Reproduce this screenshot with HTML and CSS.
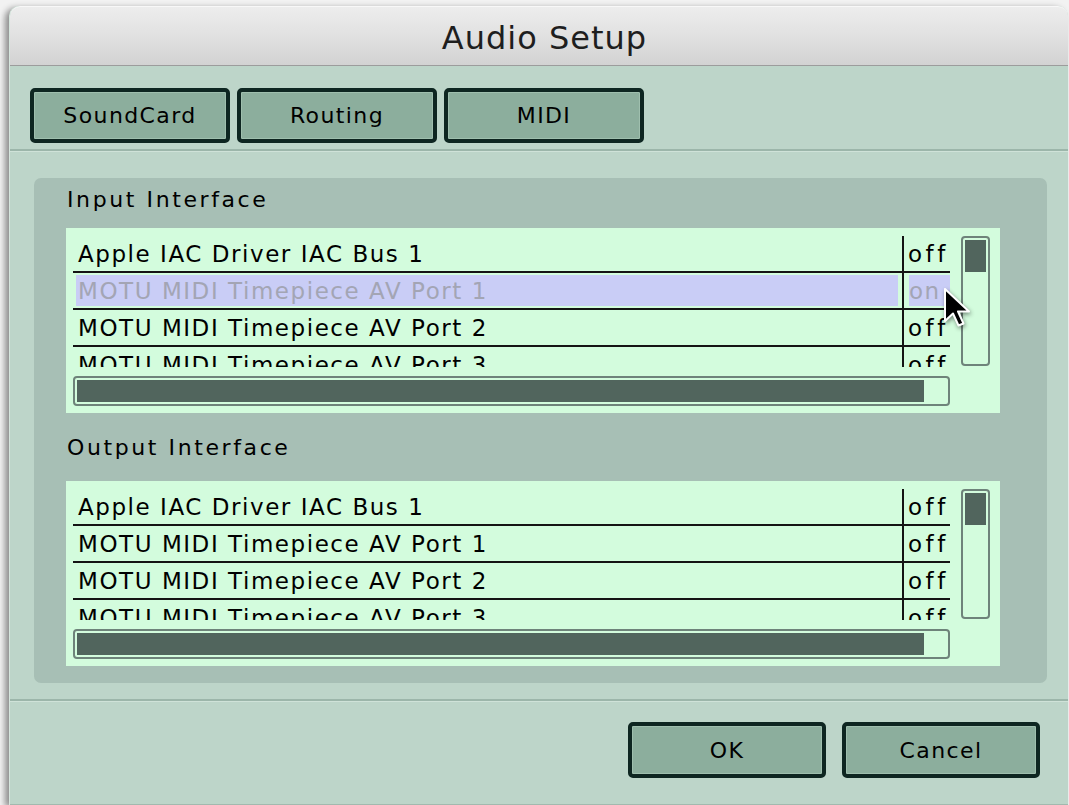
FILE: index.html
```html
<!DOCTYPE html>
<html lang="en">
<head>
<meta charset="utf-8">
<title>Audio Setup</title>
<link rel="stylesheet" href="styles.css">
</head>
<body>
<div class="desk">
  <div class="window">
    <div class="titlebar">Audio Setup</div>
    <div class="body">
      <div class="tabs">
        <button class="tab">SoundCard</button>
        <button class="tab">Routing</button>
        <button class="tab">MIDI</button>
      </div>
      <div class="content">
        <div class="panel">
          <section class="group">
            <div class="group-label">Input Interface</div>
            <div class="listbox">
              <div class="list-main">
                <div class="rows">
                  <div class="row"><div class="name"><span>Apple IAC Driver IAC Bus 1</span></div><div class="state"><span>off</span></div></div>
                  <div class="row selected"><div class="name"><span>MOTU MIDI Timepiece AV Port 1</span></div><div class="state"><span>on</span></div></div>
                  <div class="row"><div class="name"><span>MOTU MIDI Timepiece AV Port 2</span></div><div class="state"><span>off</span></div></div>
                  <div class="row"><div class="name"><span>MOTU MIDI Timepiece AV Port 3</span></div><div class="state"><span>off</span></div></div>
                </div>
                <div class="hscroll"><div class="hthumb"></div></div>
              </div>
              <div class="vscroll"><div class="vthumb"></div></div>
            </div>
          </section>
          <section class="group">
            <div class="group-label">Output Interface</div>
            <div class="listbox">
              <div class="list-main">
                <div class="rows">
                  <div class="row"><div class="name"><span>Apple IAC Driver IAC Bus 1</span></div><div class="state"><span>off</span></div></div>
                  <div class="row"><div class="name"><span>MOTU MIDI Timepiece AV Port 1</span></div><div class="state"><span>off</span></div></div>
                  <div class="row"><div class="name"><span>MOTU MIDI Timepiece AV Port 2</span></div><div class="state"><span>off</span></div></div>
                  <div class="row"><div class="name"><span>MOTU MIDI Timepiece AV Port 3</span></div><div class="state"><span>off</span></div></div>
                </div>
                <div class="hscroll"><div class="hthumb"></div></div>
              </div>
              <div class="vscroll"><div class="vthumb"></div></div>
            </div>
          </section>
        </div>
      </div>
      <div class="footer">
        <button class="btn">OK</button>
        <button class="btn">Cancel</button>
      </div>
    </div>
  </div>
  <!-- mouse pointer resting over the state column -->
  <svg class="cursor" width="40" height="56" viewBox="0 0 40 56">
    <path d="M3 2 L3 34 L11 26.5 L16.5 38.5 L21.5 36.5 L16 24.5 L27 24.5 Z" fill="#000" stroke="#fff" stroke-width="2" stroke-linejoin="round"/>
  </svg>
</div>
</body>
</html>
```

FILE: styles.css
```css
* { box-sizing: border-box; }

html, body {
  margin: 0;
  padding: 0;
  background: #f2f2f2;
}

.desk {
  position: relative;
  width: 1069px;
  height: 805px;
  overflow: hidden;
  padding: 6px 0 0 9px;
  background: #f2f2f2;
  font-family: "DejaVu Sans", "Liberation Sans", sans-serif;
}

.window {
  width: 1059px;
  height: 799px;
  display: flex;
  flex-direction: column;
  border-left: 1px solid #d6e6de;
  border-radius: 10px 10px 0 0;
  box-shadow: -4px 2px 6px rgba(0, 0, 0, 0.42);
  background: #bdd5c9;
}

.titlebar {
  height: 60px;
  flex: none;
  display: flex;
  align-items: center;
  justify-content: center;
  padding: 4px 0 0 11px;
  border-radius: 10px 10px 0 0;
  border-top: 1px solid #f8f8f8;
  border-bottom: 1px solid #9c9c9c;
  background: linear-gradient(#ededed, #e2e2e2 45%, #d2d2d2);
  color: #1e1e1e;
  font-size: 32px;
  letter-spacing: 1px;
}

.body {
  flex: 1;
  display: flex;
  flex-direction: column;
  background: #bdd5c9;
  border-bottom: 1px solid #a2b9ae;
}

/* tab strip */
.tabs {
  display: flex;
  gap: 7px;
  padding: 22px 0 6px 20px;
  border-bottom: 2px solid #9cb6aa;
  box-shadow: 0 1px 0 #cfe2d8;
}

.tab,
.btn {
  height: 55px;
  width: 200px;
  padding: 0;
  border: 4px solid #0e2621;
  border-radius: 5px;
  background: #8cae9d;
  box-shadow: inset 0 0 0 1px #9fbfae;
  color: #000;
  font-family: "DejaVu Sans", "Liberation Sans", sans-serif;
  font-size: 22px;
  letter-spacing: 1.4px;
}

/* framed area with both interface lists */
.content {
  padding: 27px 21px 16px 24px;
  border-bottom: 2px solid #9cb6aa;
  box-shadow: 0 1px 0 #cfe2d8;
}

.panel {
  background: #a7bfb5;
  border-radius: 7px;
  padding: 10px 0 17px 32px;
}

.group + .group { margin-top: 23px; }

.group-label {
  height: 24px;
  line-height: 24px;
  color: #000;
  font-size: 22px;
  letter-spacing: 2.6px;
  padding-left: 1px;
}

.listbox {
  width: 934px;
  height: 185px;
  margin-top: 16px;
  display: flex;
  gap: 11px;
  padding: 8px 10px 7px 7px;
  background: #d3fcdd;
}

.group + .group .listbox { margin-top: 21px; }

.list-main {
  width: 877px;
  display: flex;
  flex-direction: column;
  gap: 9px;
}

.rows {
  height: 131px;
  overflow: hidden;
}

.row {
  height: 37px;
  display: flex;
  border-bottom: 2px solid #141414;
}

.name {
  flex: 1;
  display: flex;
  border-right: 2px solid #141414;
}

.state {
  width: 46px;
  display: flex;
}

.name span,
.state span {
  flex: 1;
  display: flex;
  align-items: center;
  margin: 2px 4px 2px 3px;
  padding-left: 2px;
  color: #000;
  font-size: 23px;
  letter-spacing: 1.55px;
  white-space: nowrap;
}

.state span {
  margin: 2px 0 2px 2px;
  padding-left: 2px;
  letter-spacing: 3.5px;
}

.selected .name span,
.selected .state span {
  background: #c9cdf6;
  color: #a3a5b4;
}

.selected .state span {
  margin-left: 5px;
  padding-left: 0;
  letter-spacing: 1.5px;
}

.hscroll {
  height: 30px;
  padding: 2px;
  border: 2px solid #6e837a;
  border-radius: 4px;
}

.hthumb {
  width: 847px;
  height: 100%;
  background: #51655d;
}

.vscroll {
  width: 29px;
  height: 130px;
  padding: 2px;
  border: 2px solid #6e837a;
  border-radius: 4px;
}

.vthumb {
  height: 32px;
  background: #51655d;
}

/* dialog buttons */
.footer {
  display: flex;
  justify-content: flex-end;
  gap: 16px;
  padding: 21px 28px 0 0;
}

.btn {
  width: 198px;
  height: 56px;
}

.cursor {
  position: absolute;
  left: 942px;
  top: 287px;
  filter: drop-shadow(1px 2px 2px rgba(0, 0, 0, 0.45));
}
```
